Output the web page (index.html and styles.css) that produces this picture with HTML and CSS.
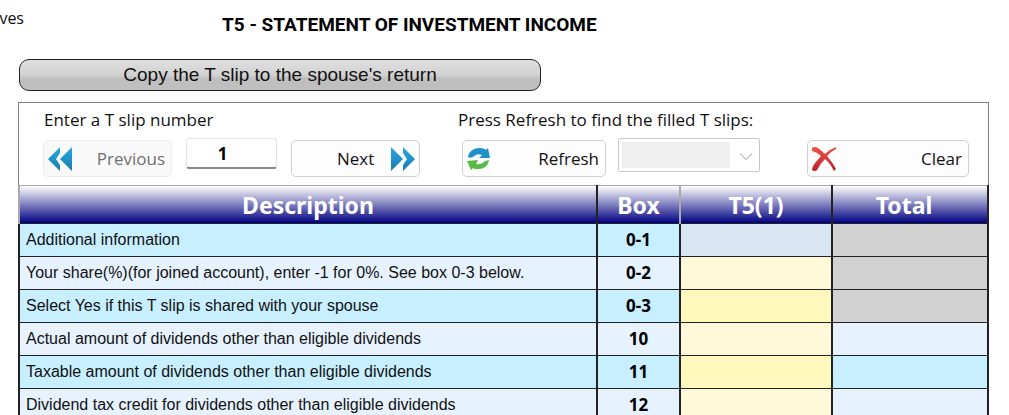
FILE: index.html
```html
<!DOCTYPE html>
<html lang="en">
<head>
<meta charset="utf-8">
<title>T5 - Statement of Investment Income</title>
<link rel="stylesheet" href="styles.css">
</head>
<body>
<header class="top">
  <span class="crumb">ves</span>
  <h1 class="title">T5 - STATEMENT OF INVESTMENT INCOME</h1>
</header>
<main class="page">
  <button class="copy" type="button">Copy the T slip to the spouse's return</button>
  <section class="panel">
    <div class="group">
      <label class="label" for="slip">Enter a T slip number</label>
      <div class="controls">
        <button class="btn previous" type="button" disabled>
          <svg class="icon" viewBox="0 0 24 24"><defs><linearGradient id="blue" x1="0" y1="0" x2="0" y2="1"><stop offset="0" stop-color="#28aae1"/><stop offset="1" stop-color="#187bb0"/></linearGradient></defs><path fill="url(#blue)" d="M12 0v6l-4 6 4 6v6L0 12zM24 0v24L12 12z"/></svg>
          <span>Previous</span>
        </button>
        <input class="number" id="slip" type="text" value="1">
        <button class="btn next" type="button">
          <span>Next</span>
          <svg class="icon" viewBox="0 0 24 24"><path fill="url(#blue)" d="M0 0l12 12L0 24zM12 0l12 12-12 12v-6l4-6-4-6z"/></svg>
        </button>
      </div>
    </div>
    <div class="group">
      <label class="label" for="filled">Press Refresh to find the filled T slips:</label>
      <div class="controls indent">
        <button class="btn refresh" type="button">
          <svg class="icon" viewBox="0 0 24 24"><path fill="#1d91c9" d="M1 10C2 4 7 1 13 1c3 0 5 1 6 2l2-2 2 10-11 0 3-3c-4-2-7 0-9 2-2 1-4 1-5 0z"/><path fill="#58b947" d="M0 14l11-1-2 4c4 1 7-1 9-3l4-1c-1 6-5 9-11 9-2 0-4 0-5-1l-2 2z"/></svg>
          <span>Refresh</span>
        </button>
        <span class="picker">
          <select class="select" id="filled" disabled><option></option></select>
          <svg class="chevron" viewBox="0 0 12 7"><path fill="none" stroke="#c4c4c4" stroke-width="1.3" d="M0 .5l6 6 6-6"/></svg>
        </span>
      </div>
    </div>
    <button class="btn clear" type="button">
      <svg class="icon" viewBox="0 0 24 24"><defs><linearGradient id="red" x1="0" y1="0" x2="0" y2="1"><stop offset="0" stop-color="#ee534c"/><stop offset="1" stop-color="#bd2026"/></linearGradient></defs><path fill="url(#red)" d="M0 1Q3-1 6 1q4 3 7 6 5-5 11-7v2q-6 3-9 7 6 7 9 13l-2 2q-4-8-9-12-5 5-8 11-2 2-5 0 0-3 3-7l6-7Q5 5 0 4z"/></svg>
      <span>Clear</span>
    </button>
  </section>
  <table class="grid">
    <colgroup><col><col class="col-box"><col class="col-slip"><col class="col-total"></colgroup>
    <thead><tr><th>Description</th><th>Box</th><th>T5(1)</th><th>Total</th></tr></thead>
    <tbody>
      <tr><td>Additional information</td><td>0-1</td><td class="head-cell"></td><td class="off"></td></tr>
      <tr><td>Your share(%)(for joined account), enter -1 for 0%. See box 0-3 below.</td><td>0-2</td><td></td><td class="off"></td></tr>
      <tr><td>Select Yes if this T slip is shared with your spouse</td><td>0-3</td><td></td><td class="off"></td></tr>
      <tr><td>Actual amount of dividends other than eligible dividends</td><td>10</td><td></td><td></td></tr>
      <tr><td>Taxable amount of dividends other than eligible dividends</td><td>11</td><td></td><td></td></tr>
      <tr><td>Dividend tax credit for dividends other than eligible dividends</td><td>12</td><td></td><td></td></tr>
    </tbody>
  </table>
</main>
</body>
</html>
```
FILE: styles.css
```css
* { box-sizing: border-box; }
body {
  margin: 0;
  height: 100vh;
  overflow: hidden;
  background: #fff;
  color: #111;
  font-family: "Open Sans", sans-serif;
  font-size: 17px;
}
.top { display: flex; align-items: flex-start; height: 59px; }
.crumb {
  display: flex;
  justify-content: flex-end;
  width: 24px;
  padding-top: 8px;
  overflow: hidden;
  font-size: 16px;
  line-height: 20px;
}
.title {
  margin: 0 0 0 198px;
  padding-top: 13px;
  color: #000;
  font: bold 19px/24px Roboto, sans-serif;
  white-space: nowrap;
}
.page { padding: 0 20px 0 18px; }
.copy {
  display: block;
  width: 522px;
  height: 32px;
  margin: 0 0 11px 1px;
  border: 1px solid #222;
  border-radius: 10px;
  background: linear-gradient(#dfdfdf, #d2d2d2 50%, #bfbfbf 62%, #bfbfbf);
  color: #111;
  font: 19px/28px "Liberation Sans", sans-serif;
}
.panel {
  display: flex;
  align-items: flex-end;
  gap: 37px;
  padding: 6px 19px 8px 24px;
  border: 1px solid #808080;
  border-bottom: 0;
}
.label { display: block; padding-left: 1px; line-height: 22px; white-space: nowrap; }
.controls { display: flex; gap: 14px; padding-top: 7px; align-items: flex-start; }
.indent { gap: 12px; padding-left: 5px; }
.btn {
  display: flex;
  align-items: center;
  justify-content: space-between;
  height: 37px;
  margin-top: 2px;
  padding: 0 6px 0 4px;
  border: 1px solid #d0d0d0;
  border-radius: 5px;
  background: #fdfdfd;
  color: #111;
  font: inherit;
  line-height: 28px;
}
.icon { display: block; width: 24px; height: 24px; }
.previous { width: 129px; border-color: #ececec; background: #f9f9f9; color: #707070; }
.next { width: 129px; padding-left: 45px; padding-right: 4px; }
.refresh { width: 144px; }
.clear { width: 162px; margin-left: auto; }
.number {
  width: 91px;
  height: 31px;
  padding: 0 18px 0 0;
  border: 1px solid #e5e5e5;
  border-bottom: 2px solid #888;
  border-radius: 3px;
  background: #fff;
  color: #000;
  font: bold 17px "Noto Sans", sans-serif;
  text-align: center;
}
.picker { position: relative; display: block; }
.select {
  display: block;
  width: 142px;
  height: 34px;
  padding: 3px 29px 3px 3px;
  border: 1px solid #c8c8c8;
  border-radius: 2px;
  appearance: none;
  background: #efefef content-box;
  opacity: 1;
}
.chevron { position: absolute; right: 8px; top: 15px; width: 12px; height: 7px; pointer-events: none; }
.grid { width: 100%; border-collapse: collapse; table-layout: fixed; }
.col-box { width: 83px; }
.col-slip { width: 152px; }
.col-total { width: 156px; }
.grid th {
  height: 38px;
  padding: 0;
  border-right: 2px solid #222;
  border-top: 1px solid #aaa;
  background: linear-gradient(#fff, #000080) no-repeat padding-box;
  color: #fff;
  font: bold 23px/28px "Noto Sans", sans-serif;
}
.grid th:first-child { border-left: 2px solid #aaa; }
.grid th:nth-child(2) { border-right-color: #aaa; }
.grid th:last-child { padding-right: 12px; }
.grid td {
  height: 33px;
  padding: 0 0 0 6px;
  border: 1px solid #222;
  border-right-width: 2px;
  background: #e6f3ff;
  font: 16px/20px "Liberation Sans", sans-serif;
  white-space: nowrap;
}
.grid td:first-child { border-left-width: 2px; }
.grid tr:nth-child(odd) td { background: #c8efff; }
.grid td:nth-child(2) { padding: 0; text-align: center; font: bold 17px/20px "Noto Sans", sans-serif; color: #000; }
.grid tr td:nth-child(3) { background: #fff9d9; }
.grid tr:nth-child(odd) td:nth-child(3) { background: #fff9bd; }
.grid tr td.head-cell:nth-child(3) { background: #d8e5f2; }
.grid tr td.off:nth-child(4) { background: #d2d2d2; }
```
